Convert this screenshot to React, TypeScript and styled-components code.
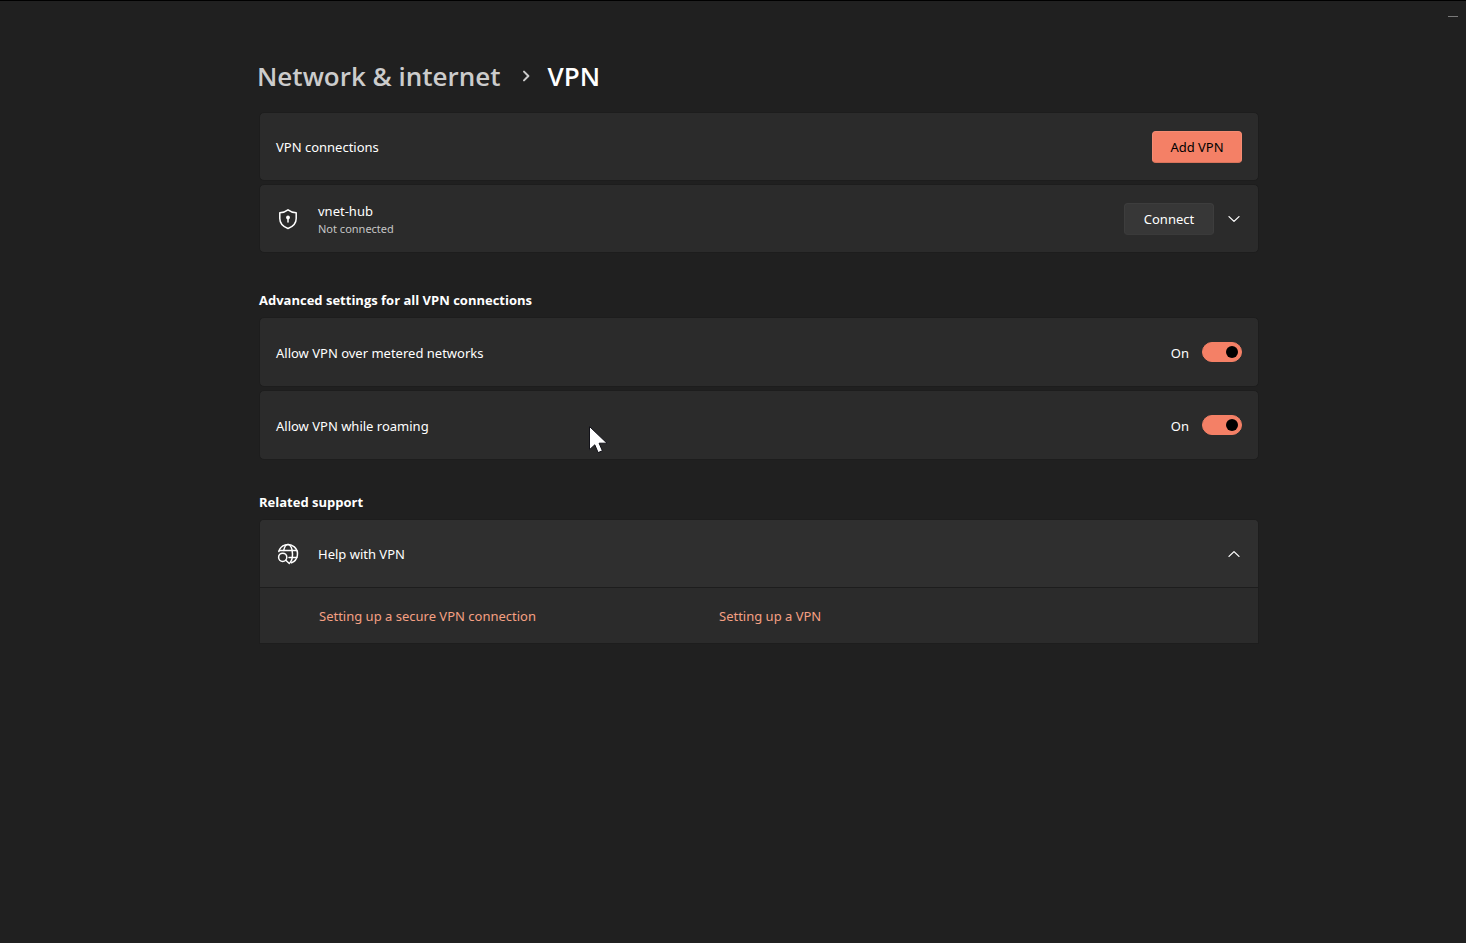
import React, { useState } from "react";
import styled, { createGlobalStyle } from "styled-components";

const GlobalStyle = createGlobalStyle`
  * { box-sizing: border-box; }
  body {
    margin: 0;
    background: #202020;
    color: #ffffff;
    font: 400 13px/20px "Noto Sans", "Open Sans", sans-serif;
  }
  button { font: inherit; color: inherit; }
`;

const Window = styled.div`
  position: relative;
  min-height: 100vh;
  border-top: 1px solid #000000;
`;

const MinimizeButton = styled.button`
  position: absolute;
  top: 0;
  right: 0;
  width: 26px;
  height: 30px;
  padding: 0;
  border: 0;
  background: transparent;
  display: grid;
  place-items: center;
`;

const Content = styled.main`
  padding: 55px 207px 40px 259px;
`;

const Breadcrumb = styled.nav`
  display: flex;
  align-items: center;
  height: 40px;
  margin: 0 0 16px -2px;
  font-family: "Open Sans", "Noto Sans", sans-serif;
  font-size: 26px;
  line-height: 40px;
  font-weight: 600;
`;

const Crumb = styled.a`
  color: #cccccc;
  text-decoration: none;
`;

const CrumbArrow = styled.svg`
  margin: 0 16px 0 19px;
`;

const PageTitle = styled.h1`
  margin: 0;
  font: inherit;
`;

const Section = styled.section<{ $spacious?: boolean }>`
  display: flex;
  flex-direction: column;
  gap: 3px;
  margin-bottom: ${(p) => (p.$spacious ? 37 : 32)}px;
`;

const SectionTitle = styled.h2`
  margin: 0 0 4px;
  font-family: "Open Sans", "Noto Sans", sans-serif;
  font-size: 13px;
  line-height: 20px;
  font-weight: 700;
`;

const Card = styled.div<{ $square?: boolean }>`
  border: 1px solid #1d1d1d;
  border-radius: ${(p) => (p.$square ? "5px 5px 0 0" : "5px")};
  background: #2b2b2b;
`;

const Row = styled.div<{ $tall?: boolean }>`
  display: flex;
  align-items: center;
  min-height: ${(p) => (p.$tall ? 68 : 67)}px;
  padding: 0 16px;
`;

const RowIcon = styled.svg`
  width: 24px;
  height: 24px;
  margin-right: 18px;
`;

const RowText = styled.div`
  flex: 1;
`;

const Caption = styled.div`
  color: #c5c5c5;
  font-size: 11px;
  line-height: 16px;
`;

const Button = styled.button<{ $accent?: boolean }>`
  width: 90px;
  height: 32px;
  padding: 0;
  border: 1px solid ${(p) => (p.$accent ? "#f58c73" : "#3d3d3d")};
  border-bottom-color: ${(p) => (p.$accent ? "#d9735b" : "#3a3a3a")};
  border-radius: 4px;
  background: ${(p) => (p.$accent ? "#f48066" : "#373737")};
  color: ${(p) => (p.$accent ? "#000000" : "#ffffff")};
`;

const ExpandButton = styled.button`
  display: grid;
  place-items: center;
  width: 32px;
  height: 32px;
  margin: 0 -8px 0 4px;
  padding: 0;
  border: 0;
  background: transparent;
`;

const ToggleLabel = styled.label`
  flex: 1;
  padding-top: 2px;
`;

const ToggleState = styled.span`
  margin-right: 13px;
  padding-top: 2px;
`;

const Toggle = styled.input`
  appearance: none;
  display: grid;
  align-items: center;
  width: 40px;
  height: 20px;
  margin: 0;
  padding: 0 3px;
  border: 1px solid #9e9e9e;
  border-radius: 10px;
  background: #272727;

  &::before {
    content: "";
    width: 12px;
    height: 12px;
    border-radius: 6px;
    background: #cfcfcf;
  }
  &:checked {
    border-color: #f48066;
    background: #f48066;
  }
  &:checked::before {
    justify-self: end;
    background: #000000;
  }
`;

const HelpHeader = styled(Row)`
  border-radius: 4px 4px 0 0;
  background: #2f2f2f;
`;

const HelpLinks = styled.div`
  display: grid;
  grid-template-columns: 400px 1fr;
  align-items: center;
  min-height: 56px;
  padding-left: 59px;
  border-top: 1px solid #1d1d1d;
`;

const HelpLink = styled.a`
  justify-self: start;
  color: #f5a083;
  text-decoration: none;
`;

const Pointer = styled.svg`
  position: absolute;
  left: 588px;
  top: 424px;
  pointer-events: none;
`;

function Chevron({ up }: { up?: boolean }) {
  return (
    <svg width="12" height="12" viewBox="0 0 12 12" fill="none" stroke="#fff" strokeWidth="1.3" strokeLinecap="round" strokeLinejoin="round" aria-hidden="true">
      <path d={up ? "M1 8.4 6 3.6l5 4.8" : "M1 3.6 6 8.4l5-4.8"} />
    </svg>
  );
}

function ToggleRow({ id, label }: { id: string; label: string }) {
  const [on, setOn] = useState(true);
  return (
    <Card>
      <Row $tall>
        <ToggleLabel htmlFor={id}>{label}</ToggleLabel>
        <ToggleState>{on ? "On" : "Off"}</ToggleState>
        <Toggle id={id} type="checkbox" role="switch" checked={on} onChange={() => setOn(!on)} />
      </Row>
    </Card>
  );
}

export default function App() {
  const [helpOpen, setHelpOpen] = useState(true);
  return (
    <Window>
      <GlobalStyle />
      <MinimizeButton aria-label="Minimize">
        <svg width="10" height="1" aria-hidden="true">
          <rect width="10" height="1" fill="#797979" />
        </svg>
      </MinimizeButton>
      <Content>
        <Breadcrumb aria-label="Breadcrumb">
          <Crumb href="#network">Network &amp; internet</Crumb>
          <CrumbArrow width="12" height="14" viewBox="0 0 12 14" fill="none" stroke="#cccccc" strokeWidth="2" strokeLinecap="round" strokeLinejoin="round" aria-hidden="true">
            <path d="M4 2.6 8.4 7 4 11.4" />
          </CrumbArrow>
          <PageTitle>VPN</PageTitle>
        </Breadcrumb>

        <Section $spacious>
          <Card>
            <Row>
              <RowText>VPN connections</RowText>
              <Button $accent>Add VPN</Button>
            </Row>
          </Card>
          <Card>
            <Row>
              <RowIcon viewBox="0 0 24 24" fill="none" stroke="#fff" strokeWidth="1.5" strokeLinejoin="round" aria-hidden="true">
                <path d="M12 2.8c2.5 1.9 5.1 2.8 8.2 3v5.7c0 4.8-2.8 8-8.2 10-5.4-2-8.2-5.2-8.2-10V5.8c3.1-.2 5.7-1.1 8.2-3Z" />
                <circle cx="12" cy="10.5" r="1.9" fill="#fff" stroke="none" />
                <path d="M12 11v4" strokeLinecap="round" />
              </RowIcon>
              <RowText>
                <div>vnet-hub</div>
                <Caption>Not connected</Caption>
              </RowText>
              <Button>Connect</Button>
              <ExpandButton aria-label="Show vnet-hub details">
                <Chevron />
              </ExpandButton>
            </Row>
          </Card>
        </Section>

        <Section>
          <SectionTitle>Advanced settings for all VPN connections</SectionTitle>
          <ToggleRow id="metered" label="Allow VPN over metered networks" />
          <ToggleRow id="roaming" label="Allow VPN while roaming" />
        </Section>

        <Section>
          <SectionTitle>Related support</SectionTitle>
          <Card $square>
            <HelpHeader>
              <RowIcon viewBox="0 0 24 24" fill="none" stroke="#fff" strokeWidth="1.5" strokeLinecap="round" aria-hidden="true">
                <path d="M2.8 9.6A9.5 9.5 0 1 1 15.5 20.8" />
                <path d="M3.3 8.5h17.4M13 15.5h7.8" />
                <path d="M7.7 8.5C8.4 4.9 10 2.5 12 2.5c2.6 0 4.5 4.2 4.5 9.500 0 4-1 7.200-2.600 8.700" />
                <circle cx="6.7" cy="15.3" r="4.1" />
                <path d="m9.8 18.3 3.500 3.200" />
              </RowIcon>
              <RowText>Help with VPN</RowText>
              <ExpandButton aria-label="Help with VPN" aria-expanded={helpOpen} onClick={() => setHelpOpen(!helpOpen)}>
                <Chevron up={helpOpen} />
              </ExpandButton>
            </HelpHeader>
            {helpOpen && (
              <HelpLinks>
                <HelpLink href="#secure-vpn">Setting up a secure VPN connection</HelpLink>
                <HelpLink href="#vpn">Setting up a VPN</HelpLink>
              </HelpLinks>
            )}
          </Card>
        </Section>
      </Content>
      <Pointer width="21" height="31" viewBox="0 0 21 31" aria-hidden="true">
        <path d="M1.5 1.500v23.200l5.300-4.900 3.300 7.800 4.300-1.800-3.300-7.600h7.900Z" fill="#fff" stroke="#111118" strokeWidth="1" />
      </Pointer>
    </Window>
  );
}
